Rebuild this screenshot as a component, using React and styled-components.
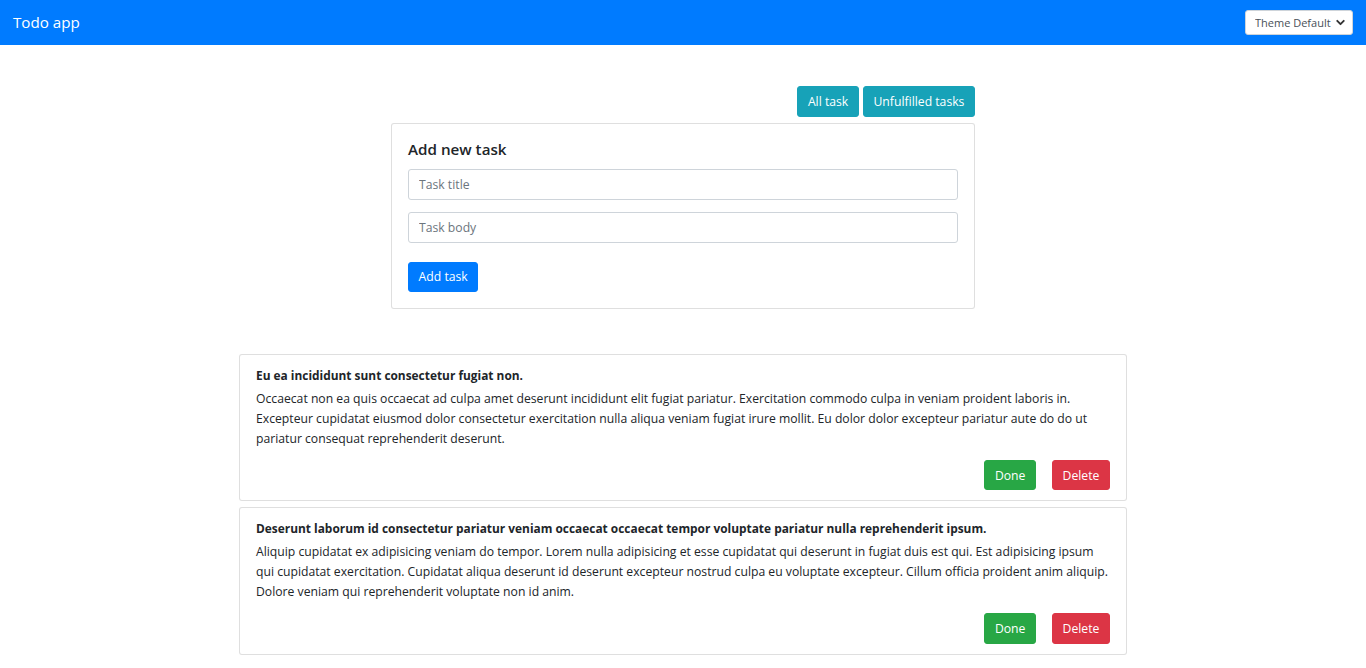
import React, { useState } from 'react'
import styled, { createGlobalStyle } from 'styled-components'
import { ChevronDown } from 'lucide-react'

const GlobalStyle = createGlobalStyle`
    * {
        box-sizing: border-box;
    }
    body {
        margin: 0;
        background: #fff;
        color: #212529;
        font-family: "Open Sans", "Noto Sans", sans-serif;
        font-size: 12.2px;
        line-height: 1.5;
    }
`

const Navbar = styled.nav`
    height: 45px;
    background: #007bff;
    display: flex;
    align-items: center;
    justify-content: space-between;
    padding: 0 13px;
`

const Brand = styled.a`
    color: #fff;
    font-size: 15.2px;
    text-decoration: none;
`

const SelectWrap = styled.div`
    position: relative;
    width: 108px;
    height: 25px;
`

const ThemeSelect = styled.select`
    appearance: none;
    width: 100%;
    height: 100%;
    border: 1px solid #ced4da;
    border-radius: 3px;
    background: #fff;
    color: #495057;
    font-family: inherit;
    font-size: 11px;
    padding: 0 20px 0 9px;
    outline: none;
`

const SelectArrow = styled.span`
    position: absolute;
    right: 6px;
    top: 6px;
    display: flex;
    pointer-events: none;
    color: #333;
`

const Container = styled.main`
    width: 912px;
    margin: 0 auto;
    padding: 41px 12px 0;
`

const FormColumn = styled.section`
    width: 584px;
    margin: 0 auto;
`

const FilterBar = styled.div`
    display: flex;
    justify-content: flex-end;
    gap: 4px;
    margin-bottom: 6px;
`

const Button = styled.button`
    height: ${(p) => p.h || '30.4px'};
    padding: 0 9.6px;
    border: 1px solid ${(p) => p.color};
    border-radius: 3px;
    background: ${(p) => p.color};
    color: #fff;
    font-family: inherit;
    font-size: 12.2px;
    cursor: pointer;
`

const Card = styled.div`
    border: 1px solid rgba(0, 0, 0, 0.125);
    border-radius: 3px;
    background: #fff;
    padding: ${(p) => p.pad || '16px'};
    margin-bottom: ${(p) => p.gap || '0'};
`

const FormTitle = styled.h5`
    margin: 0 0 11px;
    font-size: 15.2px;
    font-weight: 600;
    line-height: 1.2;
`

const Input = styled.input`
    display: block;
    width: 100%;
    height: 30.4px;
    margin-bottom: 12.8px;
    padding: 0 10px;
    border: 1px solid #ced4da;
    border-radius: 3px;
    font-family: inherit;
    font-size: 12.2px;
    color: #495057;
    &::placeholder {
        color: #6c757d;
    }
`

const FormActions = styled.div`
    padding-top: 6px;
`

const TaskList = styled.div`
    margin-top: 45px;
`

const TaskTitle = styled.h6`
    margin: 0 0 6px;
    font-size: 11.9px;
    font-weight: 700;
    line-height: 15px;
`

const TaskBody = styled.p`
    margin: 0 0 11px;
    line-height: 20px;
`

const TaskActions = styled.div`
    display: flex;
    justify-content: flex-end;
    gap: 16px;
`

const tasks = [
    {
        id: 1,
        title: 'Eu ea incididunt sunt consectetur fugiat non.',
        body:
            'Occaecat non ea quis occaecat ad culpa amet deserunt incididunt elit fugiat pariatur. Exercitation commodo culpa in veniam proident laboris in. Excepteur cupidatat eiusmod dolor consectetur exercitation nulla aliqua veniam fugiat irure mollit. Eu dolor dolor excepteur pariatur aute do do ut pariatur consequat reprehenderit deserunt.',
    },
    {
        id: 2,
        title:
            'Deserunt laborum id consectetur pariatur veniam occaecat occaecat tempor voluptate pariatur nulla reprehenderit ipsum.',
        body:
            'Aliquip cupidatat ex adipisicing veniam do tempor. Lorem nulla adipisicing et esse cupidatat qui deserunt in fugiat duis est qui. Est adipisicing ipsum qui cupidatat exercitation. Cupidatat aliqua deserunt id deserunt excepteur nostrud culpa eu voluptate excepteur. Cillum officia proident anim aliquip. Dolore veniam qui reprehenderit voluptate non id anim.',
    },
]

export default function App() {
    const [title, setTitle] = useState('')
    const [body, setBody] = useState('')

    return (
        <>
            <GlobalStyle />
            <Navbar>
                <Brand href="#">Todo app</Brand>
                <SelectWrap>
                    <ThemeSelect defaultValue="default">
                        <option value="default">Theme Default</option>
                        <option value="dark">Theme Dark</option>
                    </ThemeSelect>
                    <SelectArrow>
                        <ChevronDown size={13} strokeWidth={3.5} />
                    </SelectArrow>
                </SelectWrap>
            </Navbar>
            <Container>
                <FormColumn>
                    <FilterBar>
                        <Button color="#17a2b8" h="31px">All task</Button>
                        <Button color="#17a2b8" h="31px">Unfulfilled tasks</Button>
                    </FilterBar>
                    <Card>
                        <FormTitle>Add new task</FormTitle>
                        <Input
                            placeholder="Task title"
                            value={title}
                            onChange={(e) => setTitle(e.target.value)}
                        />
                        <Input
                            placeholder="Task body"
                            value={body}
                            onChange={(e) => setBody(e.target.value)}
                        />
                        <FormActions>
                            <Button color="#007bff">Add task</Button>
                        </FormActions>
                    </Card>
                </FormColumn>
                <TaskList>
                    {tasks.map((task) => (
                        <Card key={task.id} pad="13px 16px 10px" gap="6px">
                            <TaskTitle>{task.title}</TaskTitle>
                            <TaskBody>{task.body}</TaskBody>
                            <TaskActions>
                                <Button color="#28a745">Done</Button>
                                <Button color="#dc3545">Delete</Button>
                            </TaskActions>
                        </Card>
                    ))}
                </TaskList>
            </Container>
        </>
    )
}
